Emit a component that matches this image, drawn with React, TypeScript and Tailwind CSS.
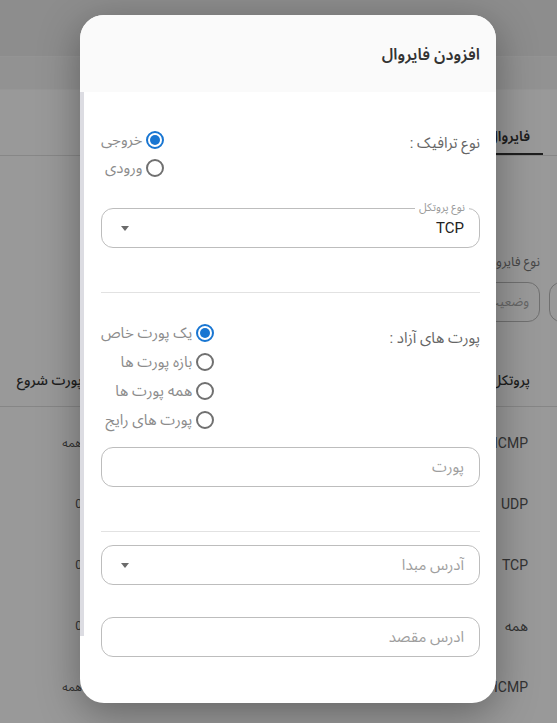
import React from "react";

const font = { fontFamily: "Roboto, 'Noto Sans Arabic', 'DejaVu Sans', sans-serif" };

function Radio({ checked, label }: { checked?: boolean; label: string }) {
  return (
    <div className="flex items-center gap-[4px] h-[29px]">
      <div
        className={
          checked
            ? "w-[18px] h-[18px] rounded-full border-2 border-[#1976d2] flex items-center justify-center"
            : "w-[18px] h-[18px] rounded-full border-2 border-[#707070]"
        }
      >
        {checked ? <div className="w-[10px] h-[10px] rounded-full bg-[#1976d2]" /> : null}
      </div>
      <span className="text-[15px] text-[#8c8c8c] leading-[20px]">{label}</span>
    </div>
  );
}

function Arrow() {
  return (
    <svg width="8" height="5" viewBox="0 0 8 5">
      <path d="M0 0 L8 0 L4 5 Z" fill="#6b6b6b" />
    </svg>
  );
}

const rows = [
  { p: "ICMP", s: "همه" },
  { p: "UDP", s: "0" },
  { p: "TCP", s: "0" },
  { p: "همه", s: "0" },
  { p: "ICMP", s: "همه" },
];

export default function App() {
  return (
    <div dir="rtl" style={font} className="relative w-[557px] h-[723px] overflow-hidden bg-white">
      {/* Background page */}
      <div className="h-[57px] bg-[#ececec] border-b border-[#f7f7f7]" />
      <div className="h-[33px] bg-[#f3f3f3] border-b border-[#fafafa]" />
      <div className="h-[66px] border-b border-[#e2e2e2] flex items-end">
        <div className="mr-[14px] w-[90px] h-[36px] flex items-center border-b-2 border-[#333] pr-[13px] text-[14px] font-semibold text-[#333]">
          فایروال
        </div>
      </div>
      <div className="pr-[17px] pt-[96px] text-[13px] text-[#777]">نوع فایروال</div>
      <div className="flex gap-[9px] mt-[10px] mr-[-100px]">
        <div className="w-[108px] h-[40px] rounded-[12px] border border-[#bbb]" />
        <div className="w-[140px] h-[40px] rounded-[12px] border border-[#bbb] pr-[10px] flex items-center text-[13px] text-[#aaa]">
          وضعیت
        </div>
      </div>
      <div className="h-[85px] border-b border-[#e0e0e0] grid grid-cols-[77px_1fr_95px] items-end pb-[16px] text-[14px] text-[#333] font-medium leading-[20px]">
        <div className="pr-[27px] whitespace-nowrap">پروتکل</div>
        <div />
        <div className="pr-[13px] whitespace-nowrap">پورت شروع</div>
      </div>
      <div className="pt-[6px]">
        {rows.map((r, i) => (
          <div key={i} className="h-[61px] grid grid-cols-[77px_1fr_95px] items-center text-[14px] text-[#555]">
            <div className="pr-[29px]">{r.p}</div>
            <div />
            <div className="pr-[13px] text-[12px]">{r.s}</div>
          </div>
        ))}
      </div>

      {/* Overlay */}
      <div className="absolute inset-0 bg-black/40" />

      {/* Dialog */}
      <div className="absolute left-[80px] top-[15px] w-[416px] h-[688px] rounded-[24px] bg-white overflow-hidden shadow-[0_10px_40px_rgba(0,0,0,0.35)]">
        <div className="h-[77px] bg-[#fafafa] flex items-center pr-[16px] pt-[2px]">
          <span className="text-[16px] font-semibold text-[#333]">افزودن فایروال</span>
        </div>
        <div className="absolute left-0 top-[77px] w-[4px] h-[544px] bg-[#dcdce2]" />
        <div className="pr-[16px] pl-[21px] pt-[34px]">
          <div className="flex justify-between items-start">
            <div className="mt-[7px] text-[15px] text-[#666] leading-[20px]">نوع ترافیک :</div>
            <div className="flex flex-col">
              <div className="h-[28px] flex items-center"><Radio checked label="خروجی" /></div>
              <div className="h-[28px] flex items-center"><Radio label="ورودی" /></div>
            </div>
          </div>

          <div className="relative mt-[26px] h-[40px] rounded-[12px] border border-[#bdbdbd] flex items-center justify-between pr-[15px] pl-[19px]">
            <span className="absolute -top-[8px] right-[10px] bg-white px-[4px] text-[11px] leading-[14px] text-[#9a9a9a]">
              نوع پروتکل
            </span>
            <span className="text-[15px] text-[#222]">TCP</span>
            <Arrow />
          </div>

          <div className="mt-[44px] h-px bg-[#e2e2e2]" />

          <div className="mt-[25px] flex justify-between items-start">
            <div className="mt-[10px] text-[15px] text-[#666] leading-[20px]">پورت های آزاد :</div>
            <div className="flex flex-col">
              <Radio checked label="یک پورت خاص" />
              <Radio label="بازه پورت ها" />
              <Radio label="همه پورت ها" />
              <Radio label="پورت های رایج" />
            </div>
          </div>

          <div className="mt-[13px] h-[40px] rounded-[12px] border border-[#bdbdbd] flex items-center pr-[15px]">
            <span className="text-[15px] text-[#9e9e9e]">پورت</span>
          </div>

          <div className="mt-[44px] h-px bg-[#e2e2e2]" />

          <div className="mt-[13px] h-[40px] rounded-[12px] border border-[#bdbdbd] flex items-center justify-between pr-[15px] pl-[19px]">
            <span className="text-[15px] text-[#9e9e9e]">آدرس مبدا</span>
            <Arrow />
          </div>

          <div className="mt-[32px] h-[40px] rounded-[12px] border border-[#bdbdbd] flex items-center pr-[15px]">
            <span className="text-[15px] text-[#9e9e9e]">ادرس مقصد</span>
          </div>
        </div>
      </div>
    </div>
  );
}
